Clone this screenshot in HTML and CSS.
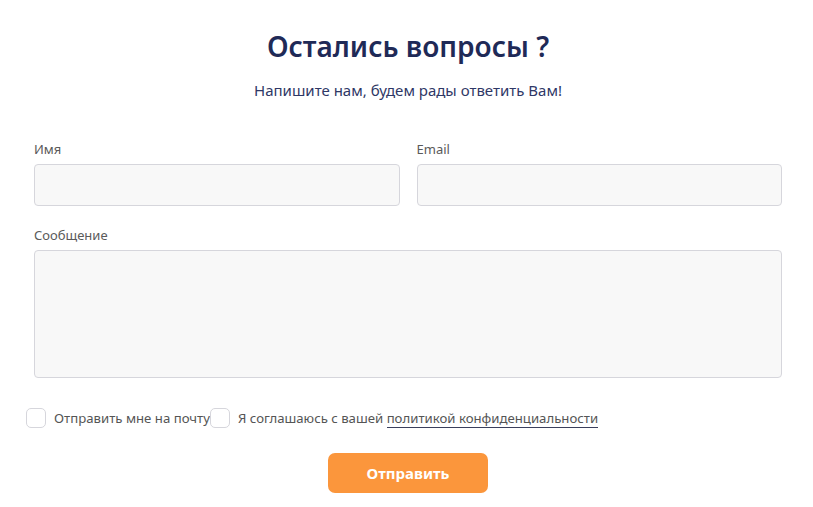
FILE: index.html
```html
<!DOCTYPE html>
<html lang="ru">
<head>
<meta charset="utf-8">
<link rel="stylesheet" href="styles.css">
</head>
<body>
<section class="feedback">
  <h1 class="title">Остались вопросы ?</h1>
  <p class="subtitle">Напишите нам, будем рады ответить Вам!</p>
  <form class="form">
    <div class="row">
      <label class="field">
        <span class="label">Имя</span>
        <input class="input" type="text">
      </label>
      <label class="field">
        <span class="label">Email</span>
        <input class="input" type="text">
      </label>
    </div>
    <label class="field">
      <span class="label">Сообщение</span>
      <textarea class="input textarea"></textarea>
    </label>
    <div class="checks">
      <label class="check"><span class="box"></span><span>Отправить мне на почту</span></label>
      <label class="check"><span class="box"></span><span>Я соглашаюсь с вашей <a class="link" href="#">политикой конфиденциальности</a></span></label>
    </div>
    <div class="actions">
      <button class="btn" type="button">Отправить</button>
    </div>
  </form>
</section>
</body>
</html>
```
FILE: styles.css
```css
* { box-sizing: border-box; }
body {
  margin: 0;
  background: #fff;
  font-family: "Noto Sans", "Open Sans", sans-serif;
}
.feedback {
  padding: 27px 31px 0 34px;
}
.title {
  margin: 0;
  text-align: center;
  font-size: 28px;
  font-weight: 600;
  color: #1f2a57;
  line-height: 38px;
}
.subtitle {
  margin: 15px 0 0;
  text-align: center;
  font-size: 15px;
  color: #2f3866;
  line-height: 20px;
}
.form {
  margin-top: 40px;
  display: flex;
  flex-direction: column;
}
.row {
  display: grid;
  grid-template-columns: 1fr 1fr;
  gap: 17px;
}
.field {
  display: flex;
  flex-direction: column;
  margin-bottom: 20px;
}
.label {
  font-size: 13px;
  color: #5a5a5a;
  line-height: 18px;
  margin-bottom: 6px;
}
.input {
  height: 42px;
  background: #f8f8f8;
  border: 1px solid #d6d6dc;
  border-radius: 4px;
  font: inherit;
  outline: none;
}
.textarea {
  height: 128px;
  resize: none;
}
.checks {
  display: flex;
  margin-left: -8px;
  margin-top: 10px;
}
.check {
  display: flex;
  align-items: center;
  gap: 8px;
  font-size: 13.2px;
  color: #555;
  line-height: 20px;
}
.box {
  width: 20px;
  height: 20px;
  border: 1px solid #d6d6dc;
  border-radius: 5px;
  background: #fff;
}
.link {
  color: #555;
  text-decoration: none;
  border-bottom: 1px solid #3a3f5c;
}
.actions {
  display: flex;
  justify-content: center;
  margin-top: 25px;
}
.btn {
  width: 160px;
  height: 40px;
  border: 0;
  border-radius: 7px;
  background: #fb963c;
  color: #fff;
  font: inherit;
  font-size: 15px;
  font-weight: 700;
}
```
